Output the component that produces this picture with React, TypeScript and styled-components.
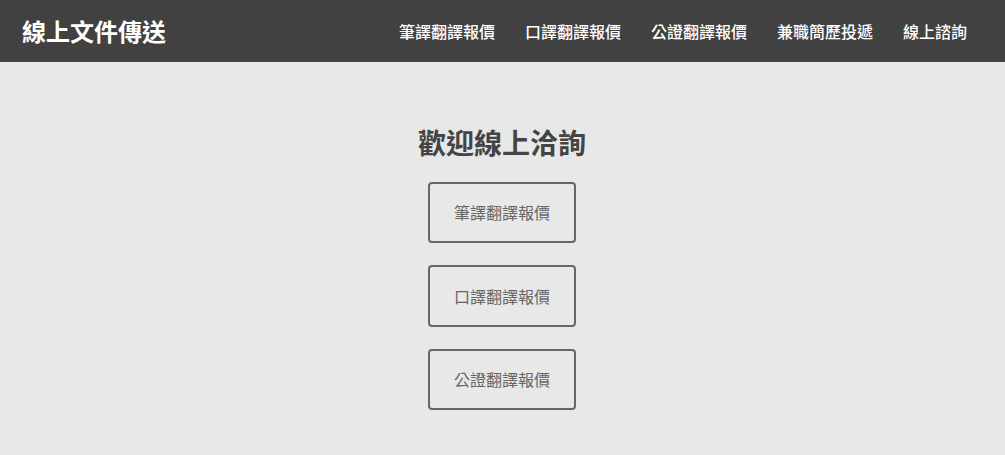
import React from "react";
import styled, { createGlobalStyle } from "styled-components";

const Global = createGlobalStyle`
  html, body { margin: 0; padding: 0; background: #e8e8e8; }
  body { font-family: "Noto Sans CJK TC", "Noto Sans", sans-serif; }
`;

const Header = styled.header`
  height: 62px;
  background: #414141;
  display: flex;
  align-items: center;
  justify-content: space-between;
  padding: 0 38px 0 22px;
`;

const Logo = styled.div`
  color: #fff;
  font-size: 24px;
  font-weight: 700;
  line-height: 1;
`;

const Nav = styled.nav`
  display: flex;
  gap: 30px;
`;

const NavLink = styled.a`
  color: #fff;
  font-size: 16px;
  font-weight: 500;
  text-decoration: none;
  line-height: 1;
`;

const Main = styled.main`
  display: flex;
  flex-direction: column;
  align-items: center;
  padding-top: 60px;
  padding-right: 1px;
  padding-bottom: 44px;
`;

const Title = styled.h1`
  margin: 0 0 19.5px;
  font-size: 28px;
  line-height: 40px;
  font-weight: 700;
  color: #444;
`;

const Buttons = styled.div`
  display: flex;
  flex-direction: column;
  gap: 22px;
`;

const Button = styled.a`
  box-sizing: border-box;
  width: 148px;
  height: 61.5px;
  border: 2px solid #676767;
  border-radius: 4px;
  display: flex;
  align-items: center;
  justify-content: center;
  color: #666;
  font-size: 16px;
  text-decoration: none;
`;

const navItems = ["筆譯翻譯報價", "口譯翻譯報價", "公證翻譯報價", "兼職簡歷投遞", "線上諮詢"];
const buttons = ["筆譯翻譯報價", "口譯翻譯報價", "公證翻譯報價"];

export default function App() {
  return (
    <>
      <Global />
      <Header>
        <Logo>線上文件傳送</Logo>
        <Nav>
          {navItems.map((t) => (
            <NavLink key={t} href="#">{t}</NavLink>
          ))}
        </Nav>
      </Header>
      <Main>
        <Title>歡迎線上洽詢</Title>
        <Buttons>
          {buttons.map((t) => (
            <Button key={t} href="#">{t}</Button>
          ))}
        </Buttons>
      </Main>
    </>
  );
}
